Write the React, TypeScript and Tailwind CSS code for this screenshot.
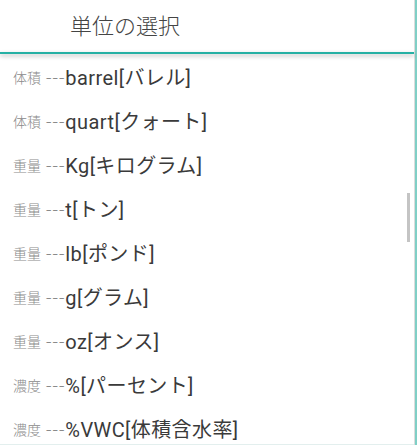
import React from "react";

const rows: [string, string][] = [
  ["体積", "barrel[バレル]"],
  ["体積", "quart[クォート]"],
  ["重量", "Kg[キログラム]"],
  ["重量", "t[トン]"],
  ["重量", "lb[ポンド]"],
  ["重量", "g[グラム]"],
  ["重量", "oz[オンス]"],
  ["濃度", "%[パーセント]"],
  ["濃度", "%VWC[体積含水率]"],
];

export default function App() {
  return (
    <div
      className="w-[417px] h-[445px] bg-white flex overflow-hidden font-light"
      style={{ fontFamily: 'Roboto, "Noto Sans CJK JP", sans-serif' }}
    >
      <div className="w-[414px] h-full flex flex-col relative border-b border-[#e3efee]">
        <div className="h-[52px] shrink-0 flex items-center pl-[70px] text-[22px] text-[#444]">
          単位の選択
        </div>
        <div className="h-[2px] shrink-0 bg-[#26b0a4] shadow-[0_2px_4px_rgba(0,0,0,0.3)] relative z-10" />
        <div className="flex-1 flex flex-col pt-[2px] pl-[13px]">
          {rows.map(([p, t], i) => (
            <div key={i} className="h-[44px] shrink-0 flex items-center whitespace-nowrap">
              <span className="text-[14px] text-[#8a8a8a]">{p}</span>
              <span className="text-[19px] text-[#8a8a8a] ml-[5px] tracking-[1px]">---</span>
              <span className="text-[20px] text-[#3a3a3a] font-normal tracking-[0.4px]">{t}</span>
            </div>
          ))}
        </div>
        <div className="absolute left-[407px] top-[193px] w-[3px] h-[49px] bg-[#c4c4c4]" />
      </div>
      <div className="w-px h-full bg-[#dcdcdc]" />
      <div className="w-[2px] h-full bg-[#7fcfc6]" />
    </div>
  );
}
